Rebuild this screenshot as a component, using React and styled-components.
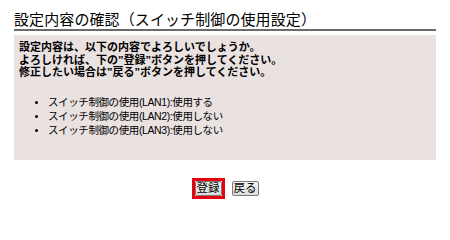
import React from "react";
import styled, { createGlobalStyle } from "styled-components";

const Global = createGlobalStyle`
  html, body { margin: 0; padding: 0; background: #ffffff; }
  body { font-family: "Liberation Sans", "Noto Sans CJK JP", sans-serif; color: #000; }
`;

const Page = styled.div`
  width: 450px;
  height: 210px;
  padding: 9px 14px 0 14px;
  box-sizing: border-box;
`;

const Title = styled.h1`
  margin: 0;
  font-family: "Noto Sans CJK JP", sans-serif;
  font-size: 15px;
  font-weight: normal;
  line-height: 19px;
  padding-bottom: 1px;
  border-bottom: 2px solid #6a6a6a;
  letter-spacing: 0.1px;
  white-space: nowrap;
`;

const Panel = styled.div`
  margin-top: 4px;
  background: #eae1e1;
  height: 125px;
  box-sizing: border-box;
  padding: 6px 5px 0 5px;
`;

const Message = styled.p`
  margin: 0;
  font-size: 11px;
  font-weight: bold;
  line-height: 12.5px;
  white-space: nowrap;
`;

const List = styled.ul`
  margin: 16px 0 0 0;
  padding: 0 0 0 29px;
  list-style: disc;
`;

const Item = styled.li`
  font-size: 10.5px;
  letter-spacing: -0.4px;
  line-height: 14px;
  white-space: nowrap;
  &::marker { font-size: 10px; }
`;

const Buttons = styled.div`
  display: flex;
  justify-content: center;
  align-items: center;
  gap: 7px;
  margin-top: 18px;
`;

const Highlight = styled.div`
  border: 3px solid #e60012;
  display: flex;
`;

const Btn = styled.button`
  font-family: "Liberation Sans", "Noto Sans CJK JP", sans-serif;
  font-size: 11.5px;
  line-height: 11px;
  height: 15px;
  padding: 0 1px;
  margin: 0;
  background: linear-gradient(#f4f4f4, #dcdcdc);
  border: 1px solid #7a7a7a;
  border-radius: 2px;
  color: #000;
`;

export default function App() {
  const items = [
    "スイッチ制御の使用(LAN1):使用する",
    "スイッチ制御の使用(LAN2):使用しない",
    "スイッチ制御の使用(LAN3):使用しない",
  ];
  return (
    <>
      <Global />
      <Page>
        <Title>設定内容の確認（スイッチ制御の使用設定）</Title>
        <Panel>
          <Message>設定内容は、以下の内容でよろしいでしょうか。</Message>
          <Message>よろしければ、下の”登録”ボタンを押してください。</Message>
          <Message>修正したい場合は”戻る”ボタンを押してください。</Message>
          <List>
            {items.map((t) => (
              <Item key={t}>{t}</Item>
            ))}
          </List>
        </Panel>
        <Buttons>
          <Highlight>
            <Btn>登録</Btn>
          </Highlight>
          <Btn>戻る</Btn>
        </Buttons>
      </Page>
    </>
  );
}
